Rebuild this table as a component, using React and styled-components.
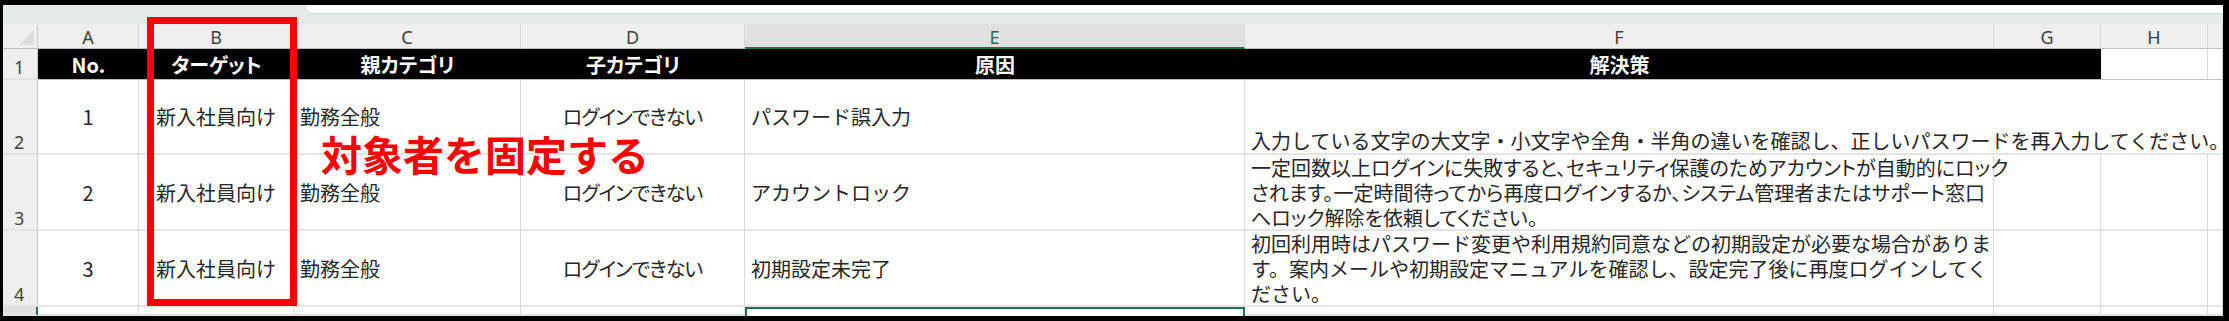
import React from "react";
import styled, { createGlobalStyle, css } from "styled-components";

const GREEN = "#217346";

const GlobalStyle = createGlobalStyle`
  html, body {
    margin: 0;
    background: #000;
    overflow: hidden;
  }
  #root {
    width: 2229px;
    height: 321px;
  }
`;

const Frame = styled.div`
  position: relative;
  margin: 5px 6px 0 3px;
  width: 2220px;
  height: 311px;
  background: #fff;
  overflow: hidden;
  font-family: "Noto Sans CJK JP", "Noto Sans", sans-serif;
`;

const TopBar = styled.div`
  height: 19px;
  background: #e6ebea;
  display: flex;
`;

const FormulaStrip = styled.div`
  margin-left: 303px;
  flex: 1;
  height: 8px;
  background: #fff;
  border-bottom: 1px solid #d2d6d6;
  border-bottom-left-radius: 7px;
`;

const Sheet = styled.div`
  display: grid;
  grid-template-columns: 35px 101px 155px 227px 224px 500px 749px 107px 107px 15px;
  grid-template-rows: 25px 31px 75px 76px 76px 9px;
`;

const Corner = styled.div`
  position: relative;
  background: #efefef;
  border-right: 1px solid #c9c9c9;
  border-bottom: 1px solid #bdbdbd;
  &::after {
    content: "";
    position: absolute;
    right: 3px;
    bottom: 3px;
    border-style: solid;
    border-width: 0 0 15px 15px;
    border-color: transparent transparent #dcdcdc transparent;
  }
`;

const ColHead = styled.div`
  display: flex;
  align-items: center;
  justify-content: center;
  background: ${(p) => (p.$selected ? "#e0e0e0" : "#efefef")};
  border-right: 1px solid #d8d8d8;
  border-bottom: ${(p) => (p.$selected ? `2px solid ${GREEN}` : "1px solid #bdbdbd")};
  color: ${(p) => (p.$selected ? GREEN : "#3f3f3f")};
  font-family: "Noto Sans", "Open Sans", sans-serif;
  font-size: 18px;
  line-height: 1;
  padding-top: 2px;
`;

const RowHead = styled.div`
  display: flex;
  align-items: flex-end;
  padding: 0 0 2px 11px;
  background: ${(p) => (p.$selected ? "#e0e0e0" : "#efefef")};
  border-right: ${(p) => (p.$selected ? `2px solid ${GREEN}` : "1px solid #c9c9c9")};
  border-bottom: 2px solid #e2e2e2;
  color: #444;
  font-family: "Noto Sans", "Open Sans", sans-serif;
  font-size: 18px;
  line-height: 18px;
`;

const TitleCell = styled.div`
  display: flex;
  align-items: center;
  justify-content: center;
  background: ${(p) => (p.$dark ? "#000" : "#fff")};
  color: #fff;
  border-bottom: 1px solid #bdbdbd;
  border-right: ${(p) => (p.$dark ? "none" : "1px solid #d8d8d8")};
  font-size: 20px;
  font-weight: 700;
  font-feature-settings: "palt";
`;

const Cell = styled.div`
  display: flex;
  flex-direction: column;
  justify-content: ${(p) => (p.$valign === "bottom" ? "flex-end" : "center")};
  align-items: ${(p) => (p.$align === "center" ? "center" : "flex-start")};
  padding: 0 4px 0 ${(p) => (p.$align === "center" ? "4px" : "6px")};
  min-width: 0;
  border-right: 1px solid #dadada;
  border-bottom: 2px solid #e4e4e4;
  color: #262626;
  font-size: 20px;
  line-height: 25px;
  white-space: nowrap;
  overflow: visible;
  grid-column: ${(p) => p.$span || "auto"};
  ${(p) =>
    p.$palt &&
    css`
      font-feature-settings: "palt";
    `}
  ${(p) =>
    p.$selected &&
    css`
      border: 2px solid ${GREEN};
      border-bottom: none;
    `}
`;

const Line = styled.span`
  display: block;
  letter-spacing: ${(p) => p.$track || "0"};
`;

const Highlight = styled.div`
  position: absolute;
  left: 144px;
  top: 12px;
  width: 150px;
  height: 289px;
  box-sizing: border-box;
  border: 7px solid #ff0000;
  pointer-events: none;
`;

const Annotation = styled.div`
  position: absolute;
  left: 318px;
  top: 128px;
  color: #ff0000;
  font-size: 41px;
  line-height: 41px;
  font-weight: 700;
  white-space: nowrap;
`;

const letters = ["A", "B", "C", "D", "E", "F", "G", "H", ""];
const titles = ["No.", "ターゲット", "親カテゴリ", "子カテゴリ", "原因", "解決策", ""];

const rows = [
  {
    no: 1,
    cause: "パスワード誤入力",
    lines: [
      "入力している文字の大文字・小文字や全角・半角の違いを確認し、正しいパスワードを再入力してください。",
    ],
  },
  {
    no: 2,
    cause: "アカウントロック",
    palt: true,
    lines: [
      "一定回数以上ログインに失敗すると、セキュリティ保護のためアカウントが自動的にロック",
      "されます。一定時間待ってから再度ログインするか、システム管理者またはサポート窓口",
      "へロック解除を依頼してください。",
    ],
  },
  {
    no: 3,
    cause: "初期設定未完了",
    lines: [
      "初回利用時はパスワード変更や利用規約同意などの初期設定が必要な場合がありま",
      "す。案内メールや初期設定マニュアルを確認し、設定完了後に再度ログインしてく",
      "ださい。",
    ],
  },
];

export default function App() {
  return (
    <>
      <GlobalStyle />
      <Frame>
        <TopBar>
          <FormulaStrip />
        </TopBar>
        <Sheet>
          <Corner />
          {letters.map((l, i) => (
            <ColHead key={i} $selected={l === "E"}>
              {l}
            </ColHead>
          ))}

          <RowHead>1</RowHead>
          {titles.map((t, i) => (
            <TitleCell key={i} $dark>
              {t}
            </TitleCell>
          ))}
          <TitleCell />
          <TitleCell />

          {rows.map((r, idx) => (
            <React.Fragment key={r.no}>
              <RowHead>{r.no + 1}</RowHead>
              <Cell $align="center">{r.no}</Cell>
              <Cell $align="center">新入社員向け</Cell>
              <Cell>勤務全般</Cell>
              <Cell $align="center" $palt>
                <Line $track="-1px">ログインできない</Line>
              </Cell>
              <Cell>{r.cause}</Cell>
              {idx === 0 ? (
                <Cell $valign="bottom" $span="span 4">
                  <Line>{r.lines[0]}</Line>
                </Cell>
              ) : (
                <>
                  <Cell $palt={r.palt}>
                    {r.lines.map((line, k) => (
                      <Line key={k}>{line}</Line>
                    ))}
                  </Cell>
                  <Cell />
                  <Cell />
                  <Cell />
                </>
              )}
            </React.Fragment>
          ))}

          <RowHead $selected />
          <Cell />
          <Cell />
          <Cell />
          <Cell />
          <Cell $selected />
          <Cell />
          <Cell />
          <Cell />
          <Cell />
        </Sheet>
        <Highlight />
        <Annotation>対象者を固定する</Annotation>
      </Frame>
    </>
  );
}
